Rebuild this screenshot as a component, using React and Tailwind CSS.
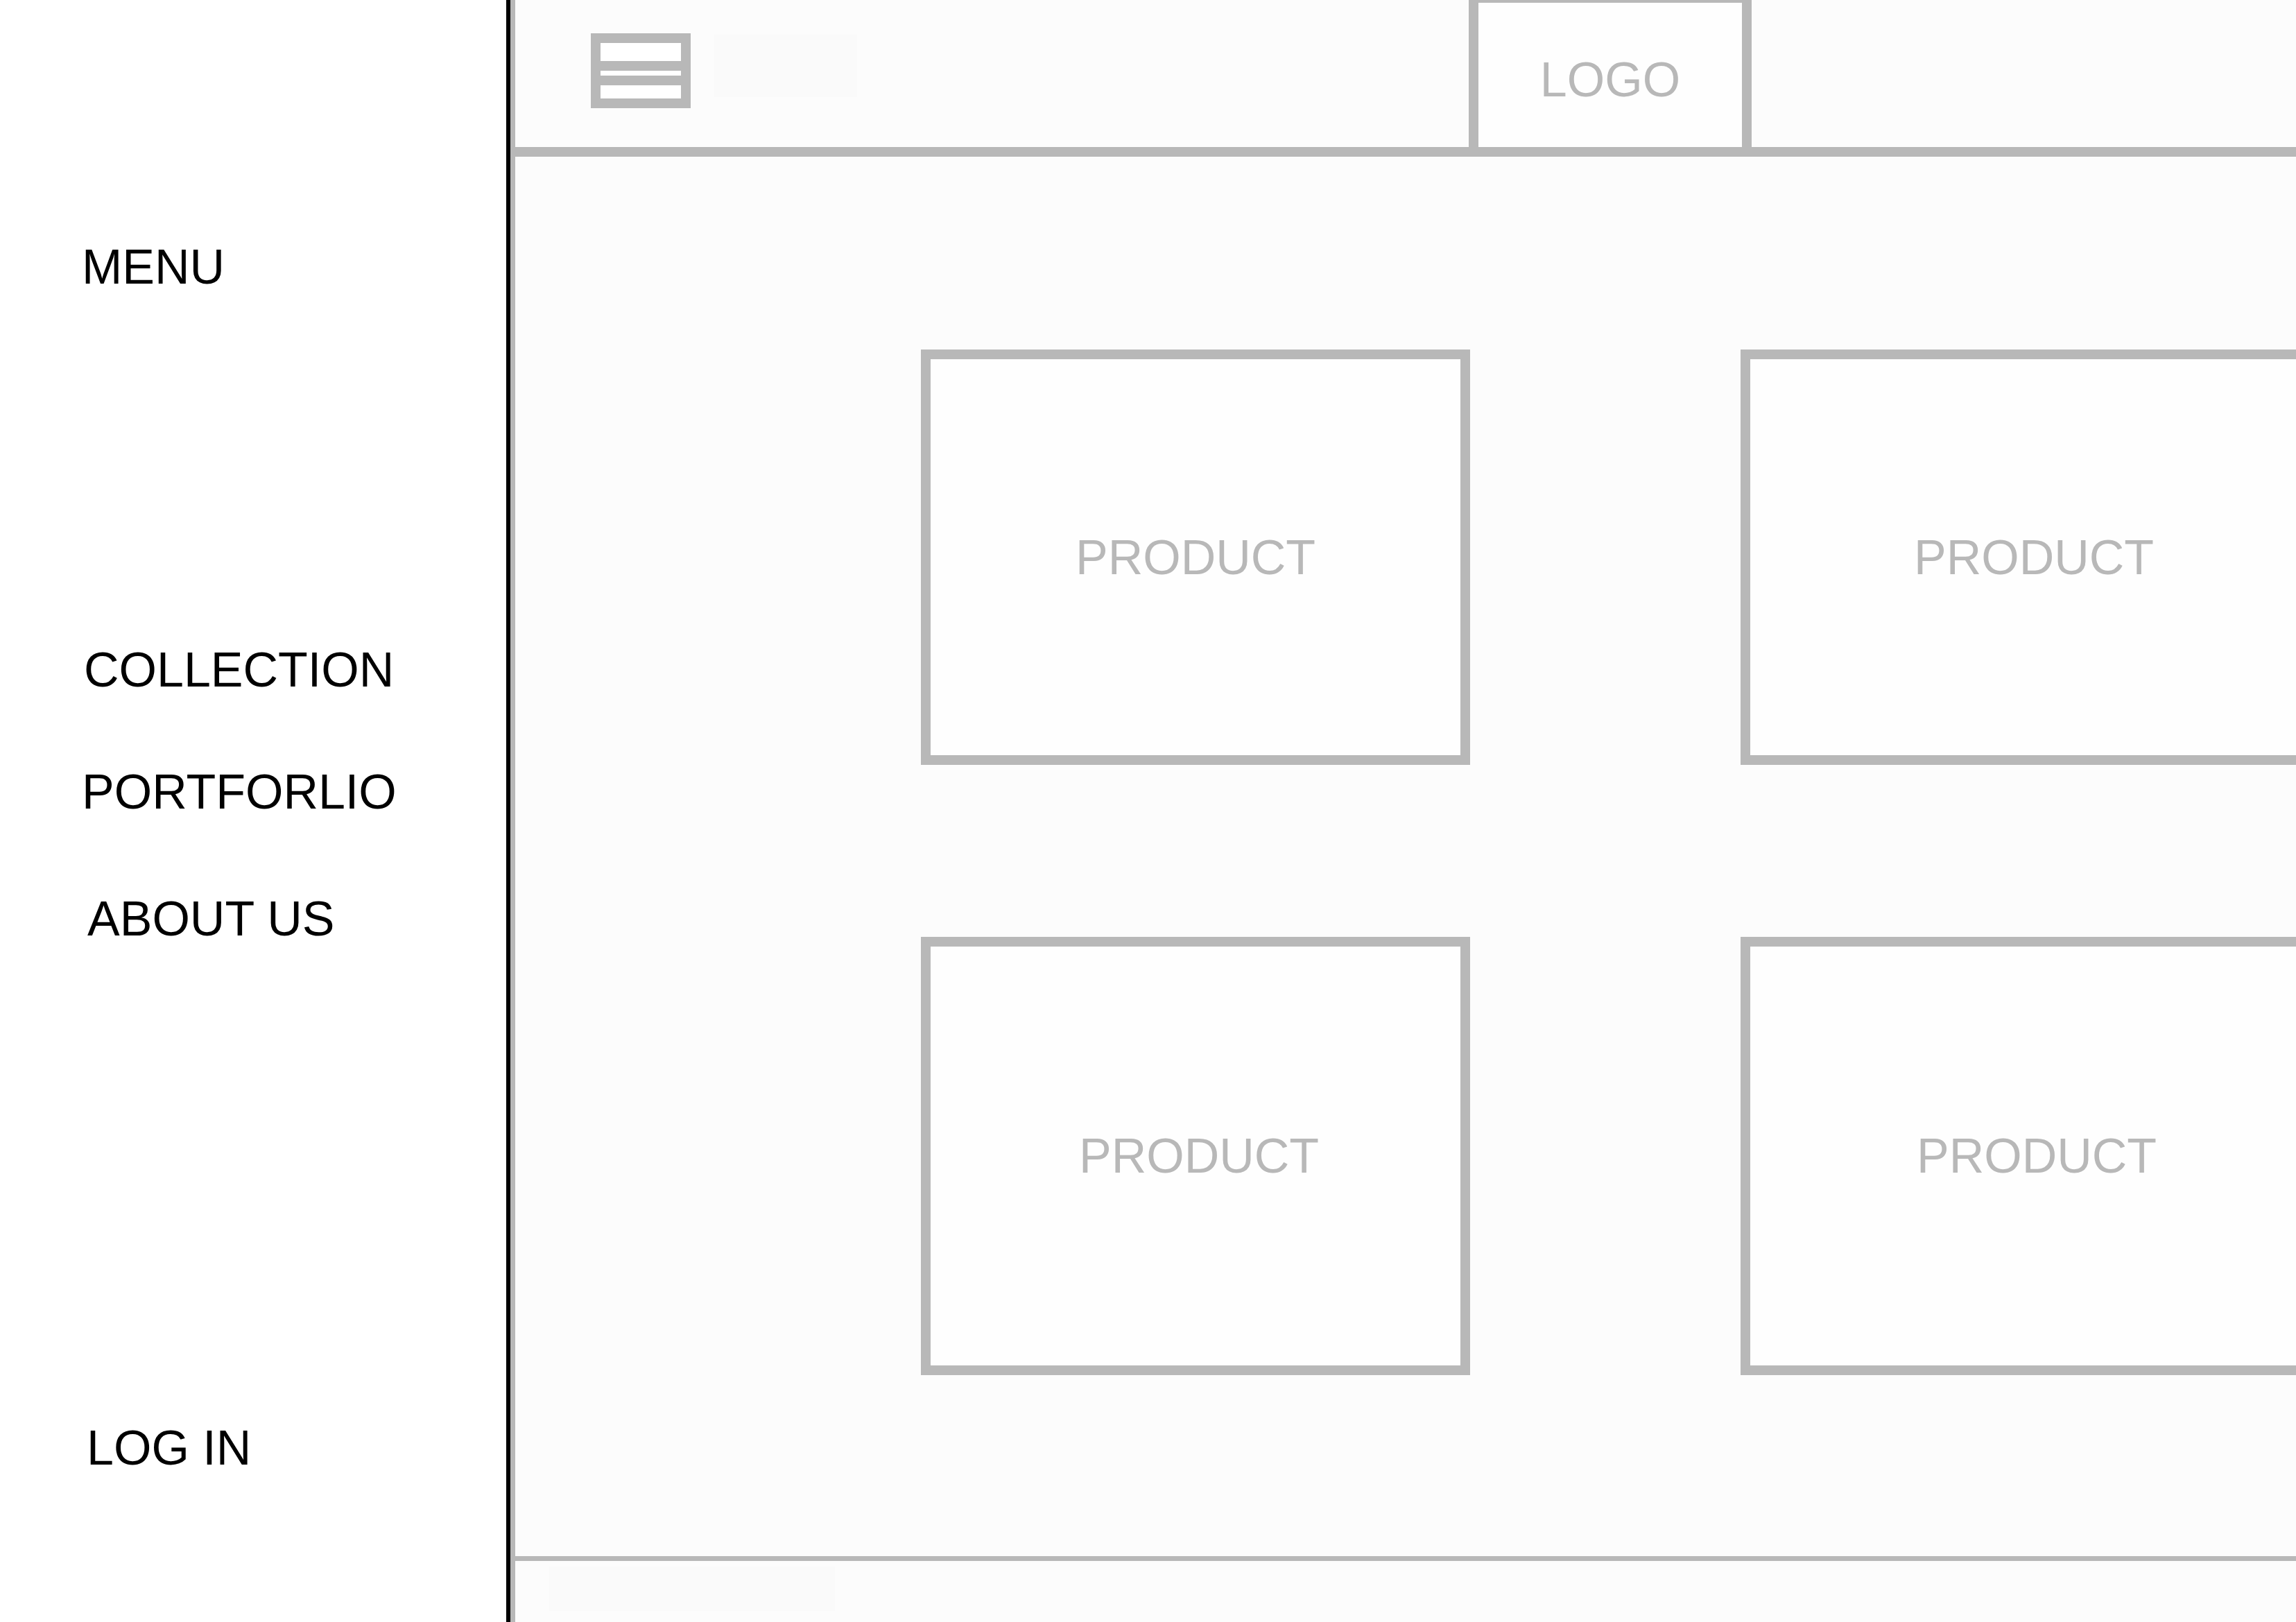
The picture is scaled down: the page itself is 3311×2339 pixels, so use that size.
import React from 'react';

const ProductCard = ({ className }) => {
  return (
    <div className={`shrink-0 border-[14px] border-[#b8b8b8] bg-[#fefefe] flex items-center justify-center ${className}`}>
      <span className="text-[70px] leading-none text-[#b8b8b8]">PRODUCT</span>
    </div>
  );
};

const Hamburger = () => {
  return (
    <div className="w-[144px] h-[108px] border-[14px] border-[#b8b8b8] bg-white flex flex-col pt-[26px]">
      <div className="h-[14px] bg-[#b8b8b8]" />
      <div className="h-[14px] bg-[#b8b8b8] mt-[7px]" />
    </div>
  );
};

export default function App() {
  return (
    <div className="w-[3311px] h-[2339px] overflow-hidden flex bg-white font-['Liberation_Sans',Arial,sans-serif]">
      {/* sidebar */}
      <aside className="w-[736px] shrink-0 h-full bg-white border-r-[6px] border-black flex flex-col pt-[350px] text-[70px] leading-none text-black">
        <span className="ml-[118px]">MENU</span>
        <span className="ml-[121px] mt-[511px]">COLLECTION</span>
        <span className="ml-[118px] mt-[106px]">PORTFORLIO</span>
        <span className="ml-[126px] mt-[113px]">ABOUT US</span>
        <span className="ml-[125px] mt-[693px]">LOG IN</span>
      </aside>

      {/* main */}
      <main className="flex-1 min-w-0 h-full bg-[#fcfcfc] border-l-[7px] border-[#b8b8b8] flex flex-col overflow-hidden">
        <header className="h-[226px] shrink-0 border-b-[14px] border-[#b8b8b8] flex items-start">
          <div className="ml-[109px] mt-[48px]">
            <Hamburger />
          </div>
          <div className="ml-[34px] mt-[50px] w-[206px] h-[90px] bg-[#fafafa]" />
          <div className="ml-[882px] w-[408px] h-[212px] border-x-[14px] border-t-[4px] border-[#b8b8b8] bg-[#fefefe] flex justify-center pt-[76px]">
            <span className="text-[70px] leading-none text-[#b8b8b8]">LOGO</span>
          </div>
        </header>

        <section className="h-[2018px] shrink-0 flex flex-col pt-[278px] pl-[585px]">
          <div className="flex gap-[390px]">
            <ProductCard className="w-[792px] h-[599px]" />
            <ProductCard className="w-[846px] h-[599px]" />
          </div>
          <div className="flex gap-[390px] mt-[248px]">
            <ProductCard className="w-[792px] h-[632px] pl-[10px]" />
            <ProductCard className="w-[846px] h-[632px] pl-[8px]" />
          </div>
        </section>

        <footer className="flex-1 border-t-[7px] border-[#b8b8b8] pt-[8px] pl-[49px]">
          <div className="w-[412px] h-[64px] bg-[#fafafa]" />
        </footer>
      </main>
    </div>
  );
}
